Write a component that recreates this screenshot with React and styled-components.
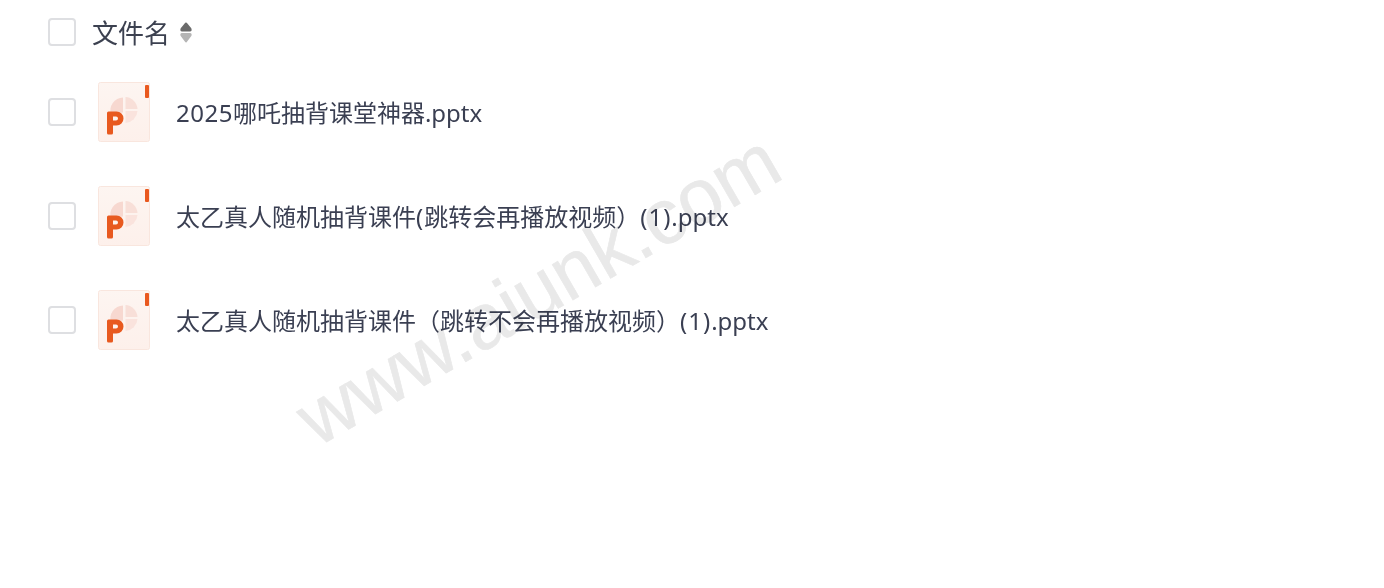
import React from "react";
import styled, { createGlobalStyle } from "styled-components";

const Global = createGlobalStyle`
  html, body { margin: 0; padding: 0; background: #fff; }
  body { font-family: "Noto Sans", "Noto Sans CJK SC", sans-serif; width: 1384px; height: 588px; overflow: hidden; }
`;
const Page = styled.div`
  position: relative;
  width: 1384px;
  height: 588px;
  overflow: hidden;
  padding: 4px 0 0 48px;
  box-sizing: border-box;
`;
const Header = styled.div`
  display: flex;
  align-items: center;
  height: 56px;
`;
const Row = styled.div`
  display: flex;
  align-items: center;
  height: 104px;
`;
const Check = styled.span`
  flex: none;
  width: 28px;
  height: 28px;
  box-sizing: border-box;
  border: 2px solid #dedfe2;
  border-radius: 4px;
  background: #fff;
`;
const HeaderTitle = styled.span`
  margin-left: 16px;
  padding-top: 2px;
  font-size: 26px;
  line-height: 36px;
  color: #3c4150;
`;
const SortIcon = styled.svg`
  margin-left: 9px;
  width: 14px;
  height: 24px;
`;
const FileIcon = styled.svg`
  flex: none;
  margin-left: 22px;
  width: 52px;
  height: 60px;
`;
const FileName = styled.span`
  margin-left: 26px;
  padding-top: 2px;
  font-size: 24px;
  line-height: 36px;
  color: #3a3f52;
  white-space: nowrap;
`;
const Wide = styled.span`
  letter-spacing: ${(p) => p.$by}px;
`;
const Watermark = styled.div`
  position: absolute;
  left: 267px;
  top: 244px;
  font-family: "Liberation Sans", sans-serif;
  font-size: 78px;
  line-height: 90px;
  color: #e9e9e9;
  -webkit-text-stroke: 0.6px #e9e9e9;
  white-space: nowrap;
  transform: rotate(-30deg);
  transform-origin: center;
  mix-blend-mode: multiply;
  pointer-events: none;
`;

const Ppt = () => (
  <FileIcon viewBox="0 0 52 60">
    <defs>
      <linearGradient id="sheet" x1="0" y1="0" x2="0" y2="1">
        <stop offset="0" stopColor="#fdf5f1" />
        <stop offset="1" stopColor="#fdf0eb" />
      </linearGradient>
    </defs>
    <rect x="0.5" y="0.5" width="51" height="59" rx="2" fill="url(#sheet)" stroke="#f9e6de" />
    <rect x="47" y="3" width="4" height="13" rx="1" fill="#e9591f" />
    <path d="M25 15.5 a13 13 0 0 0 -12 17 l12 -2z" fill="#f7d8d0" />
    <path d="M27.5 15 a13 13 0 0 1 12 12 h-12z" fill="#f8dfd8" />
    <path d="M39.5 29 a13 13 0 0 1 -12 12 v-12z" fill="#fae3dd" />
    <path
      d="M10.5 29.5 h8 a6.5 6.5 0 0 1 0 14 h-3.5 v7.5 a1.5 1.5 0 0 1 -1.5 1.5 h-3 a1.5 1.5 0 0 1 -1.5 -1.5 v-20 a1.5 1.5 0 0 1 1.5 -1.5z M15 34.5 v4 h3 a2 2 0 0 0 0 -4z"
      fill="#e8591f"
      fillRule="evenodd"
    />
  </FileIcon>
);

const files = [
  <><Wide $by={0.5}>2025</Wide>哪吒抽背课堂神器.pptx</>,
  <>太乙真人随机抽背课件<Wide $by={1}>(</Wide>跳转会再播放视频）<Wide $by={1}>(1)</Wide>.pptx</>,
  <>太乙真人随机抽背课件（跳转不会再播放视频）<Wide $by={1}>(1)</Wide>.pptx</>,
];

export default function App() {
  return (
    <Page>
      <Global />
      <Header>
        <Check />
        <HeaderTitle>文件名</HeaderTitle>
        <SortIcon viewBox="0 0 14 24">
          <path d="M7 3.5 L11.5 9 Q12 10.5 11 10.5 H3 Q2 10.5 2.5 9z" fill="#6b6b6b" stroke="#6b6b6b" strokeWidth="2" strokeLinejoin="round" />
          <path d="M7 21.5 L11.5 15.5 Q12 14 11 14 H3 Q2 14 2.5 15.5z" fill="#b5b5b5" stroke="#b5b5b5" strokeWidth="2" strokeLinejoin="round" />
        </SortIcon>
      </Header>
      {files.map((f, i) => (
        <Row key={i}>
          <Check />
          <Ppt />
          <FileName>{f}</FileName>
        </Row>
      ))}
      <Watermark>www.aiunk.com</Watermark>
    </Page>
  );
}
